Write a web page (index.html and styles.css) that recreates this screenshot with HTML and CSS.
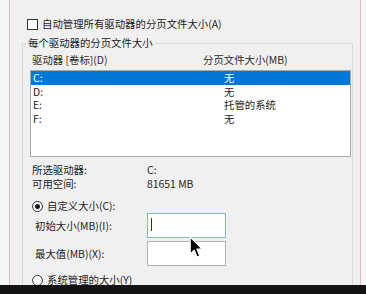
FILE: index.html
```html
<!DOCTYPE html>
<html lang="zh-CN">
<head>
<meta charset="utf-8">
<title>虚拟内存</title>
<link rel="stylesheet" href="styles.css">
</head>
<body>
<div class="screen">
  <div class="edge edge-left"></div>
  <div class="panel">
    <label class="check-row"><span class="checkbox"></span><span>自动管理所有驱动器的分页文件大小(A)</span></label>
    <fieldset class="group">
      <legend>每个驱动器的分页文件大小</legend>
      <div class="list-head"><span class="head-drive">驱动器 [卷标](D)</span><span>分页文件大小(MB)</span></div>
      <ul class="list">
        <li class="selected"><span class="col-drive">C:</span><span>无</span></li>
        <li><span class="col-drive">D:</span><span>无</span></li>
        <li><span class="col-drive">E:</span><span>托管的系统</span></li>
        <li><span class="col-drive">F:</span><span>无</span></li>
      </ul>
      <div class="info">
        <div class="info-row"><span class="info-label">所选驱动器:</span><span>C:</span></div>
        <div class="info-row"><span class="info-label">可用空间:</span><span>81651 MB</span></div>
      </div>
      <label class="radio-row first"><span class="radio checked"></span><span>自定义大小(C):</span></label>
      <div class="field-row"><span class="field-label">初始大小(MB)(I):</span><span class="input focused"><span class="caret"></span></span></div>
      <div class="field-row second"><span class="field-label">最大值(MB)(X):</span><span class="input"></span></div>
      <label class="radio-row last"><span class="radio"></span><span>系统管理的大小(Y)</span></label>
    </fieldset>
  </div>
  <div class="edge edge-right"></div>
</div>
<div class="taskbar"></div>
<svg class="cursor" width="15" height="23" viewBox="0 0 14 22" aria-hidden="true">
  <path d="M1 1 L1 17 L4.8 13.4 L7.6 20 L10 19 L7.3 12.5 L12.4 12.5 Z" fill="#000" stroke="#fff" stroke-width="1" stroke-linejoin="round"/>
</svg>
</body>
</html>
```
FILE: styles.css
```css
html, body {
  margin: 0;
  padding: 0;
}
body {
  width: 366px;
  height: 294px;
  overflow: hidden;
  background: #f0f0f0;
  font-family: "Noto Sans CJK SC", "Noto Sans", sans-serif;
  font-size: 10.4px;
  color: #1c1c1c;
  position: relative;
}
.screen {
  display: flex;
  height: 285px;
  overflow: hidden;
}
.edge {
  background: #f6f6f6;
  flex: none;
}
.edge-left {
  width: 9px;
  border-right: 1px solid #e4bcbf;
}
.edge-right {
  width: 5px;
  border-left: 1px solid #e4bcbf;
}
.panel {
  flex: 1;
  background: #f0f0f0;
  padding-top: 17px;
}
.check-row {
  display: flex;
  align-items: center;
  gap: 4px;
  margin-left: 17px;
  height: 14px;
  line-height: 14px;
}
.checkbox {
  width: 9px;
  height: 9px;
  border: 1px solid #333;
  background: #fff;
  flex: none;
}
.group {
  margin: 5px 0 0 12px;
  width: 331px;
  box-sizing: border-box;
  border: 1px solid #d9d9d9;
  border-bottom: none;
  padding: 0 1px 0 7px;
  min-width: 0;
}
.group legend {
  padding: 0 2px;
  margin-left: -4px;
  line-height: 14px;
  height: 14px;
}
.list-head {
  display: flex;
  margin-top: 3px;
  padding-left: 2px;
  line-height: 14px;
  height: 14px;
  color: #2a2a2a;
}
.head-drive {
  width: 171px;
}
.list {
  list-style: none;
  margin: 3px 0 0;
  padding: 0;
  height: 85px;
  border: 1px solid #a9a9a9;
  background: #fff;
}
.list li {
  display: flex;
  height: 13.5px;
  line-height: 13.5px;
  padding-left: 2px;
}
.list li.selected {
  background: #0078d7;
  color: #fff;
}
.col-drive {
  width: 191px;
}
.info {
  margin-top: 6px;
  padding-left: 2px;
}
.info-row {
  display: flex;
  height: 14px;
  line-height: 14px;
}
.info-label {
  width: 115px;
}
.radio-row {
  display: flex;
  align-items: center;
  gap: 4px;
  padding-left: 2px;
  height: 14px;
  line-height: 14px;
}
.radio-row.first {
  margin-top: 8px;
}
.radio-row.last {
  margin-top: 7px;
}
.radio {
  width: 9px;
  height: 9px;
  border: 1px solid #333;
  border-radius: 50%;
  background: #fff;
  flex: none;
  position: relative;
}
.radio.checked::after {
  content: "";
  position: absolute;
  left: 2px;
  top: 2px;
  width: 5px;
  height: 5px;
  border-radius: 50%;
  background: #1c1c1c;
}
.field-row {
  display: flex;
  align-items: center;
  padding-left: 5px;
  height: 25px;
}
.field-row.second {
  margin-top: 3px;
}
.field-label {
  width: 112px;
  line-height: 14px;
}
.input {
  width: 79px;
  height: 25px;
  box-sizing: border-box;
  border: 1px solid #b0b0b0;
  background: #fff;
  position: relative;
}
.input.focused {
  border-color: #7eb4ea;
}
.caret {
  position: absolute;
  left: 3px;
  top: 4px;
  width: 1px;
  height: 13px;
  background: #333;
}
.taskbar {
  height: 9px;
  background: #131313;
}
.cursor {
  position: absolute;
  left: 189px;
  top: 236px;
}
```
